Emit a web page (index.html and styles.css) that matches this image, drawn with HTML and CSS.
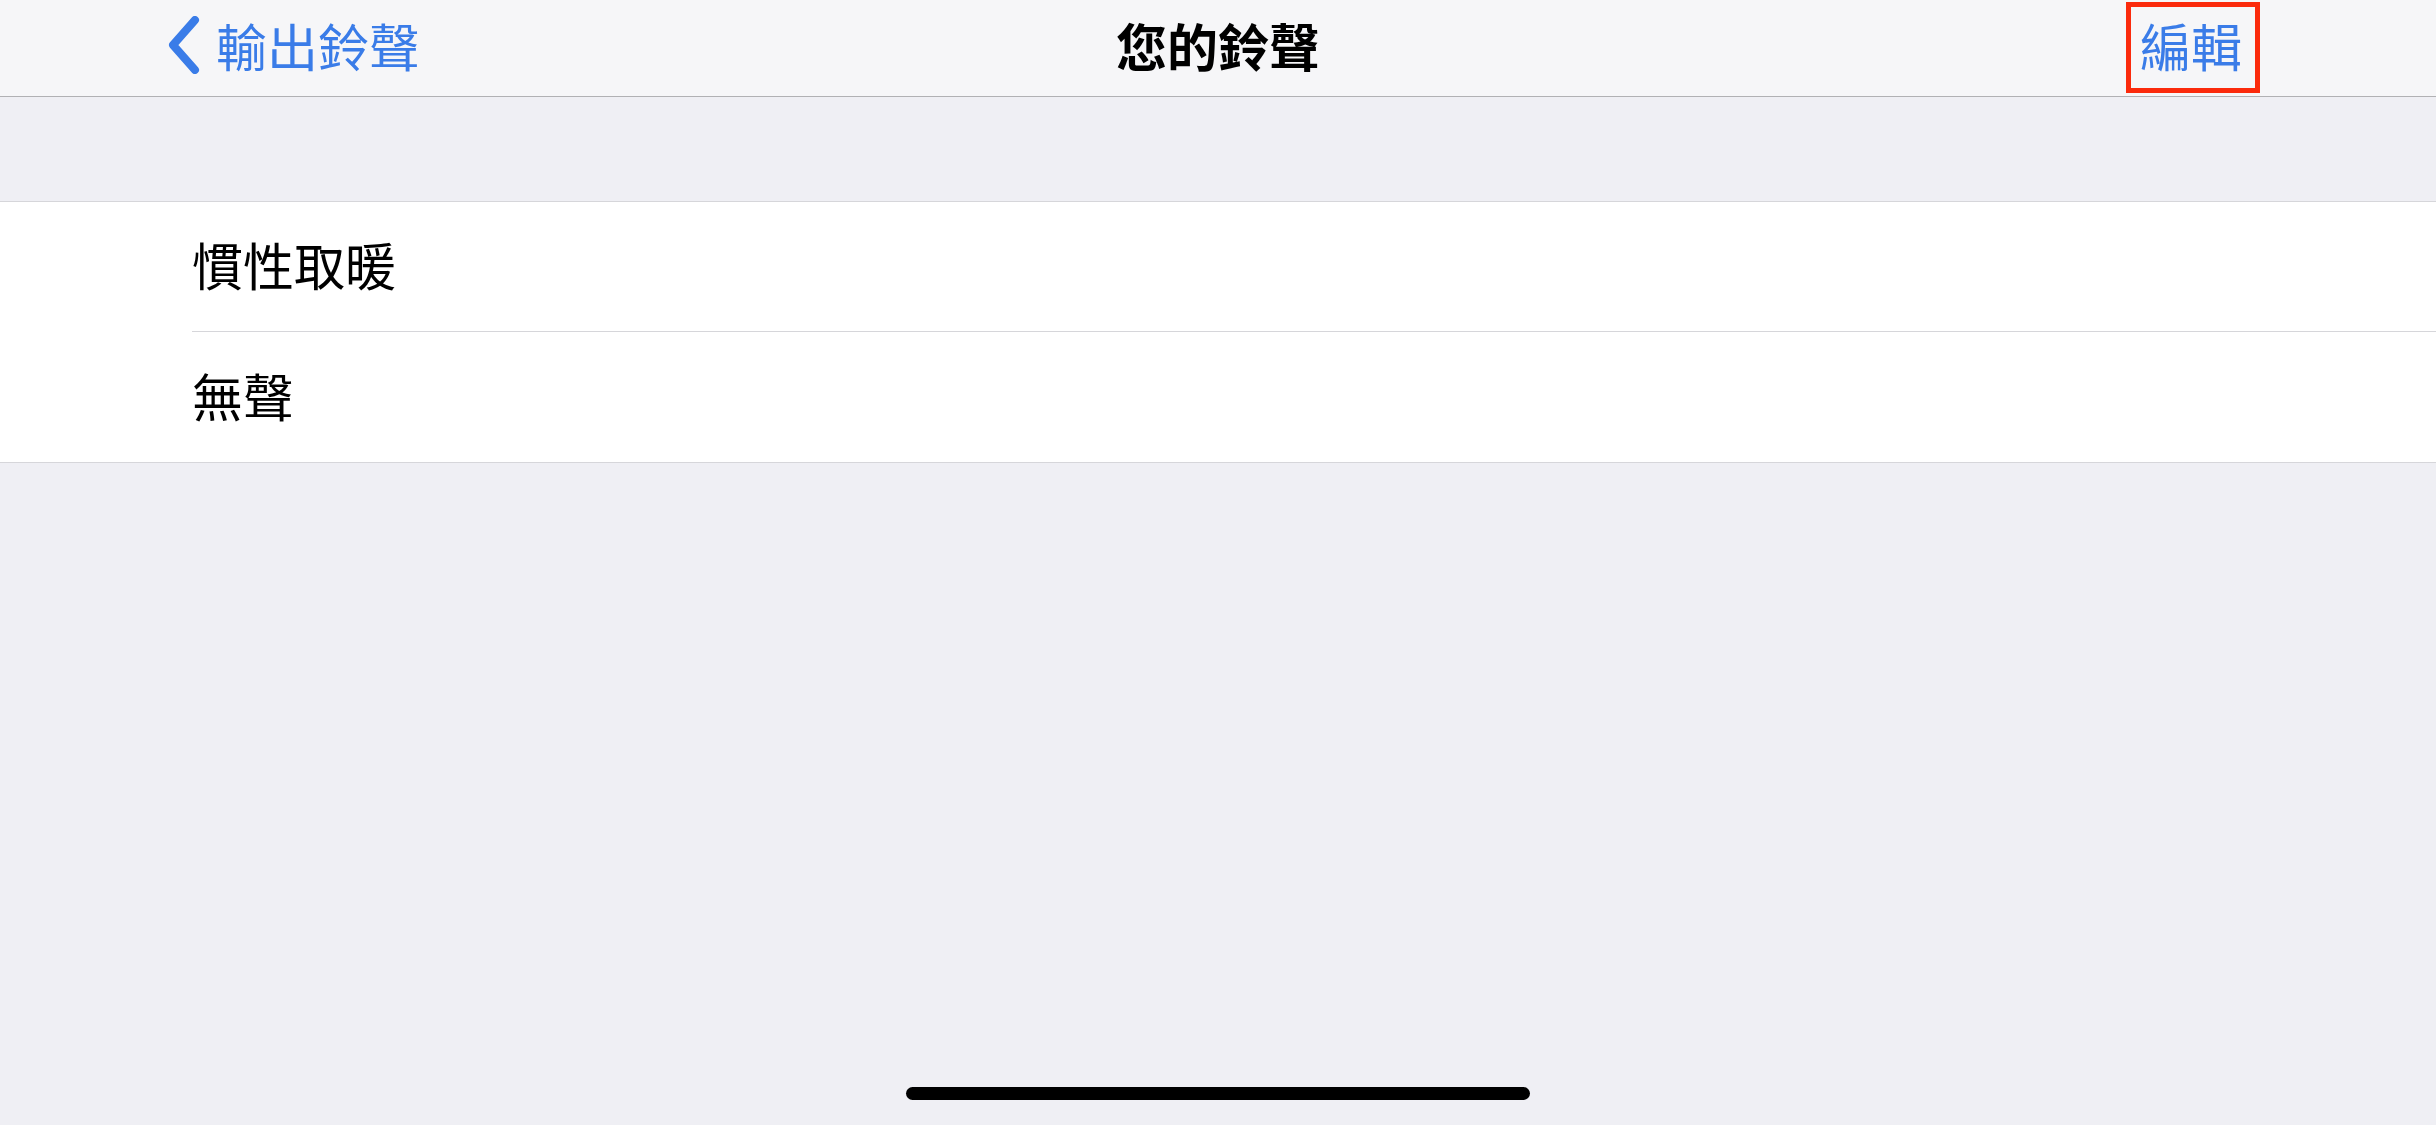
FILE: index.html
```html
<!DOCTYPE html>
<html lang="zh-Hant">
<head>
<meta charset="utf-8">
<title>您的鈴聲</title>
<link rel="stylesheet" href="styles.css">
</head>
<body>
<div class="screen">
  <header class="navbar">
    <div class="nav-left">
      <a class="back">
        <svg class="chevron" width="36" height="58" viewBox="0 0 36 58">
          <path d="M29 4 L7 29 L29 54" fill="none" stroke="#3a7ce8" stroke-width="8" stroke-linecap="round" stroke-linejoin="round"/>
        </svg>
        <span class="back-label">輸出鈴聲</span>
      </a>
    </div>
    <h1 class="title">您的鈴聲</h1>
    <div class="nav-right">
      <a class="edit">編輯</a>
    </div>
  </header>
  <main class="content">
    <ul class="list">
      <li class="row"><div class="row-inner">慣性取暖</div></li>
      <li class="row"><div class="row-inner">無聲</div></li>
    </ul>
  </main>
  <div class="home-indicator"></div>
</div>
</body>
</html>
```

FILE: styles.css
```css
html, body {
  margin: 0;
  padding: 0;
}
body {
  width: 2436px;
  height: 1125px;
  overflow: hidden;
  background: #efeff4;
  font-family: "Noto Sans CJK TC", "Noto Sans CJK SC", "Noto Sans", sans-serif;
}
.screen {
  height: 1125px;
  display: flex;
  flex-direction: column;
}
.navbar {
  height: 96px;
  flex: none;
  background: #f6f6f8;
  border-bottom: 1px solid #b1b1b4;
  display: grid;
  grid-template-columns: 1fr auto 1fr;
  align-items: start;
}
.nav-left {
  padding-left: 166px;
  display: flex;
  align-items: center;
  height: 90px;
}
.back {
  display: flex;
  align-items: center;
  gap: 14px;
  color: #3a7ce8;
}
.chevron {
  display: block;
}
.back-label {
  font-size: 51px;
  line-height: 90px;
}
.title {
  margin: 0;
  font-size: 51px;
  font-weight: 700;
  color: #000;
  line-height: 90px;
}
.nav-right {
  display: flex;
  justify-content: flex-end;
  padding-right: 194px;
}
.edit {
  position: relative;
  font-size: 51px;
  line-height: 90px;
  color: #3a7ce8;
}
.edit::after {
  content: "";
  position: absolute;
  left: -14px;
  right: -18px;
  top: 2px;
  bottom: -3px;
  border: 5px solid #fb2a0c;
}
.content {
  padding-top: 104px;
}
.list {
  list-style: none;
  margin: 0;
  padding: 0;
  background: #fff;
  border-top: 1px solid #d6d6da;
  border-bottom: 1px solid #d6d6da;
}
.row {
  padding-left: 192px;
}
.row-inner {
  height: 130px;
  box-sizing: border-box;
  padding-bottom: 5px;
  display: flex;
  align-items: center;
  font-size: 51px;
  color: #000;
}
.row:first-child .row-inner {
  border-bottom: 1px solid #d6d6da;
}
.home-indicator {
  margin-top: auto;
  margin-bottom: 25px;
  align-self: center;
  width: 624px;
  height: 13px;
  border-radius: 7px;
  background: #000;
}
```
